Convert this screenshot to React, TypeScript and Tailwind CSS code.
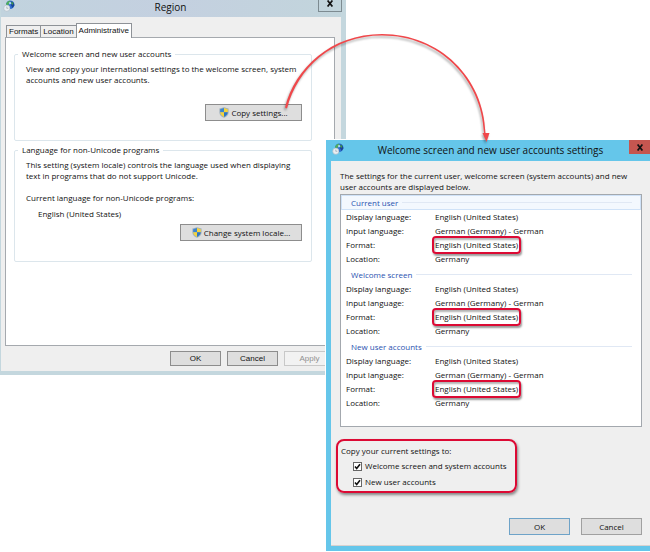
import React, { useState } from 'react';

interface LocaleGroup {
  title: string;
  rows: { label: string; value: string; marked?: boolean }[];
}

const ROWS = [
  { label: 'Display language:', value: 'English (United States)' },
  { label: 'Input language:', value: 'German (Germany) - German' },
  { label: 'Format:', value: 'English (United States)', marked: true },
  { label: 'Location:', value: 'Germany' },
];

const GROUPS: LocaleGroup[] = [
  { title: 'Current user', rows: ROWS },
  { title: 'Welcome screen', rows: ROWS },
  { title: 'New user accounts', rows: ROWS },
];

const TABS = ['Formats', 'Location', 'Administrative'];

const GlobeIcon = () => (
  <svg viewBox="0 0 12 12" className="h-3 w-3 shrink-0" aria-hidden="true">
    <circle cx="7.200" cy="4.800" r="4.200" fill="#2f6fd0" />
    <path d="M3.200 3.600C3.800 1.800 5.400.7 7 .7l.4 1.700-1.600 1.400-.6 2-2 .2z" fill="#4fae5a" />
    <path d="M8.600 1.200c1.800.8 2.900 2.400 2.700 4.400L9.600 8 8.200 5.600z" fill="#1b4596" />
    <path d="M8.600 1.500 10.400 3l-.6 2-1.400-1.200z" fill="#3f9a46" />
    <path d="M5.800 2.600 7.600 2l.8 1.400-1.800 1.200z" fill="#b9dcf4" />
    <circle cx="3.800" cy="8.200" r="3.100" fill="#e9eef2" stroke="#a9b8c4" strokeWidth=".6" />
    <path d="M3.800 6.600v1.700h1.500" fill="none" stroke="#8b98a2" strokeWidth=".6" />
  </svg>
);

const ShieldIcon = () => (
  <svg viewBox="0 0 10 11" className="h-[11px] w-2.5 shrink-0" aria-hidden="true">
    <path d="M5 .3 9.6 1.6v3.6C9.6 8 7.6 9.8 5 10.7 2.4 9.8.4 8 .4 5.2V1.6z" fill="#9fb0bd" />
    <path d="M5 1.1v4.2H1.2V2.2z" fill="#3b86d0" />
    <path d="M5 1.1v4.2h3.8V2.2z" fill="#f5d33c" />
    <path d="M1.2 5.3H5v4.6C3 9.1 1.3 7.6 1.2 5.3z" fill="#f5d33c" />
    <path d="M8.8 5.3H5v4.6c2-.8 3.7-2.3 3.8-4.6z" fill="#2f76c2" />
  </svg>
);

const CloseGlyph = () => (
  <svg viewBox="0 0 8 7" className="h-[7px] w-2" aria-hidden="true">
    <path d="M1.600.5 6.400 6.500M6.400.5 1.600 6.500" stroke="#111" strokeWidth="1.700" />
  </svg>
);

const GroupBox: React.FC<{ title: string; className: string; children: React.ReactNode }> = ({ title, className, children }) => (
  <fieldset className={`rounded-xs border border-[#dce6ec] px-[11px] ${className}`}>
    <legend className="-ml-2 px-1 leading-2">{title}</legend>
    {children}
  </fieldset>
);

const RegionWindow = () => {
  const [activeTab, setActiveTab] = useState('Administrative');

  return (
    <section className="w-[346px] border-r-[5px] border-b-4 border-l border-[#c4d7de] bg-[#efefef]">
      <header className="flex h-[17px] items-start bg-linear-to-r from-[#c1d3de] via-[#c4d0e0] to-[#c2d5dc]">
        <div className="pl-0.5">
          <GlobeIcon />
        </div>
        <h1 className="flex-1 pl-2 text-center text-[10px] leading-[14px]">Region</h1>
        <button aria-label="Close" className="-mr-px flex h-3 w-6 items-center justify-center border border-t-0 border-[#7d8b91] pb-1">
          <CloseGlyph />
        </button>
      </header>

      <div className="pt-1.5 pr-1.5 pl-1">
        <div role="tablist" className="flex items-end pl-px font-['Liberation_Sans',sans-serif] text-[8px]">
          {TABS.map((tab) => (
            <button
              key={tab}
              role="tab"
              aria-selected={activeTab === tab}
              onClick={() => setActiveTab(tab)}
              className={
                activeTab === tab
                  ? 'relative -mb-px h-[15px] border border-b-0 border-[#8e9297] bg-white px-0.5 leading-3'
                  : 'h-3 border border-r-0 border-b-0 border-[#8e9297] px-0.5 leading-3'
              }
            >
              {tab}
            </button>
          ))}
        </div>

        <div className="border border-[#a5a9ae] bg-white px-2 pt-3 pb-[83px]">
          <GroupBox title="Welcome screen and new user accounts" className="mr-3.5 pb-[19px]">
            <p className="mt-[5px] leading-[11px]">
              View and copy your international settings to the welcome screen, system
              <br />
              accounts and new user accounts.
            </p>
            <div className="-mr-0.5 mt-[19px] flex justify-end">
              <button className="flex h-[17px] w-[97px] items-center justify-center gap-0.5 border border-[#8d8d8d] bg-[#dedede]">
                <ShieldIcon />
                Copy settings...
              </button>
            </div>
          </GroupBox>

          <GroupBox title="Language for non-Unicode programs" className="mt-[5px] mr-3.5 pb-5">
            <p className="mt-[5px] leading-[11px]">
              This setting (system locale) controls the language used when displaying
              <br />
              text in programs that do not support Unicode.
            </p>
            <p className="mt-[11px] leading-[11px]">Current language for non-Unicode programs:</p>
            <p className="mt-[5px] pl-3 leading-[11px]">English (United States)</p>
            <div className="-mr-0.5 mt-[5px] flex justify-end">
              <button className="flex h-[17px] w-[122px] items-center justify-center gap-0.5 border border-[#8d8d8d] bg-[#dedede]">
                <ShieldIcon />
                Change system locale...
              </button>
            </div>
          </GroupBox>
        </div>

        <footer className="-mr-1.5 flex justify-end gap-1.5 py-[5px] font-['Liberation_Sans',sans-serif] text-[8px]">
          <button className="h-[15px] w-[51px] border border-[#8d8d8d] bg-[#dedede] leading-3">OK</button>
          <button className="h-[15px] w-[51px] border border-[#8d8d8d] bg-[#dedede] leading-3">Cancel</button>
          <button disabled className="mr-1.5 h-[15px] w-[51px] border border-[#c8c8c8] bg-[#f2f2f2] leading-3 text-[#909090]">
            Apply
          </button>
        </footer>
      </div>
    </section>
  );
};

const AccountsDialog = () => {
  const [targets, setTargets] = useState([
    { name: 'Welcome screen and system accounts', checked: true },
    { name: 'New user accounts', checked: true },
  ]);

  const toggle = (name: string) => {
    setTargets(targets.map((t) => (t.name === name ? { ...t, checked: !t.checked } : t)));
  };

  return (
    <section className="absolute top-[140px] right-0 left-[326px] border-b-[5px] border-l-[5px] border-[#65c6ea] bg-[#efefef] ring-1 ring-white">
      <header className="flex h-[21px] items-start bg-[#65c6ea]">
        <div className="pt-[3px] pl-px">
          <GlobeIcon />
        </div>
        <h2 className="flex-1 pl-2 text-center text-[10px] leading-5">Welcome screen and new user accounts settings</h2>
        <button aria-label="Close" className="flex h-3.5 w-[21px] items-center justify-center bg-[#c55650]">
          <CloseGlyph />
        </button>
      </header>

      <div className="border-b border-[#d8d2d0] pt-2 pr-2 pb-2.5 pl-[9px]">
        <p className="pt-px leading-[11px]">
          The settings for the current user, welcome screen (system accounts) and new
          <br />
          user accounts are displayed below.
        </p>

        <div className="mt-0.5 border border-[#a3a8ae] bg-white pb-[15px]">
          {GROUPS.map((group, i) => (
            <div key={group.title} className="mb-px">
              <h3
                className={`flex h-[15px] items-center gap-1 pr-2 pl-[9px] text-[#2a52b0] ${
                  i === 0 ? 'border border-[#cfe2f8] bg-[#f3f8fe]' : 'border border-transparent'
                }`}
              >
                {group.title}
                <span className="h-px flex-1 bg-[#e0e8f4]" />
              </h3>
              <dl className="grid grid-cols-[89px_1fr] pl-[5px] leading-[14px]">
                {group.rows.map((row) => (
                  <React.Fragment key={row.label}>
                    <dt>{row.label}</dt>
                    <dd className="relative">
                      {row.value}
                      {row.marked && (
                        <span className="absolute -top-0.5 -left-[3px] h-[18px] w-[89px] rounded-sm border-2 border-[#dc0a34] shadow-[1px_2px_2px_rgba(0,0,0,0.4),inset_1px_2px_2px_rgba(0,0,0,0.3)]" />
                      )}
                    </dd>
                  </React.Fragment>
                ))}
              </dl>
            </div>
          ))}
        </div>

        <fieldset className="mt-3 -ml-1 w-[181px] rounded-lg border-2 border-[#dc0a34] px-[3px] pt-1 pb-px shadow-[1px_2px_3px_rgba(0,0,0,0.45)]">
          <p className="leading-3">Copy your current settings to:</p>
          {targets.map((target) => (
            <label key={target.name} className="flex h-4 items-center gap-[3px] pl-3 first-of-type:mt-px">
              <span className="relative flex h-[9px] w-[9px]">
                <input
                  type="checkbox"
                  checked={target.checked}
                  onChange={() => toggle(target.name)}
                  className="h-[9px] w-[9px] appearance-none border border-[#666] bg-white"
                />
                {target.checked && (
                  <svg viewBox="0 0 9 9" className="pointer-events-none absolute inset-0 h-[9px] w-[9px]" aria-hidden="true">
                    <path d="M2 4.400 3.700 6.500 7 2.200" fill="none" stroke="#111" strokeWidth="1.600" />
                  </svg>
                )}
              </span>
              {target.name}
            </label>
          ))}
        </fieldset>

        <footer className="mt-[25px] flex justify-end gap-[11px]">
          <button className="h-[17px] w-[61px] border border-[#6ea3c8] bg-[#dedede]">OK</button>
          <button className="h-[17px] w-[61px] border border-[#a0a0a0] bg-[#dedede]">Cancel</button>
        </footer>
      </div>
    </section>
  );
};

// Curved callout from "Copy settings..." to the dialog it opens
const CalloutArrow = () => (
  <svg
    viewBox="0 0 210 114"
    className="pointer-events-none absolute top-[30px] left-[281px] h-[114px] w-[210px] drop-shadow-[-1px_2px_1px_rgba(0,0,0,0.35)]"
    aria-hidden="true"
  >
    <path
      d="M4 77.5C14 38 50 4 101 4c58 0 102 44 103.500 99l-1.500 0C201 49 158 5.500 101 5.500 52 5.500 16.500 38 6 78.500z"
      fill="#f0474a"
    />
    <path d="M201.500 103h7l-3 9z" fill="#f0474a" />
  </svg>
);

export default function App() {
  return (
    <main className="relative min-h-screen overflow-hidden bg-white font-['Open_Sans','Noto_Sans',sans-serif] text-[8px] text-[#111]">
      <RegionWindow />
      <AccountsDialog />
      <CalloutArrow />
    </main>
  );
}
